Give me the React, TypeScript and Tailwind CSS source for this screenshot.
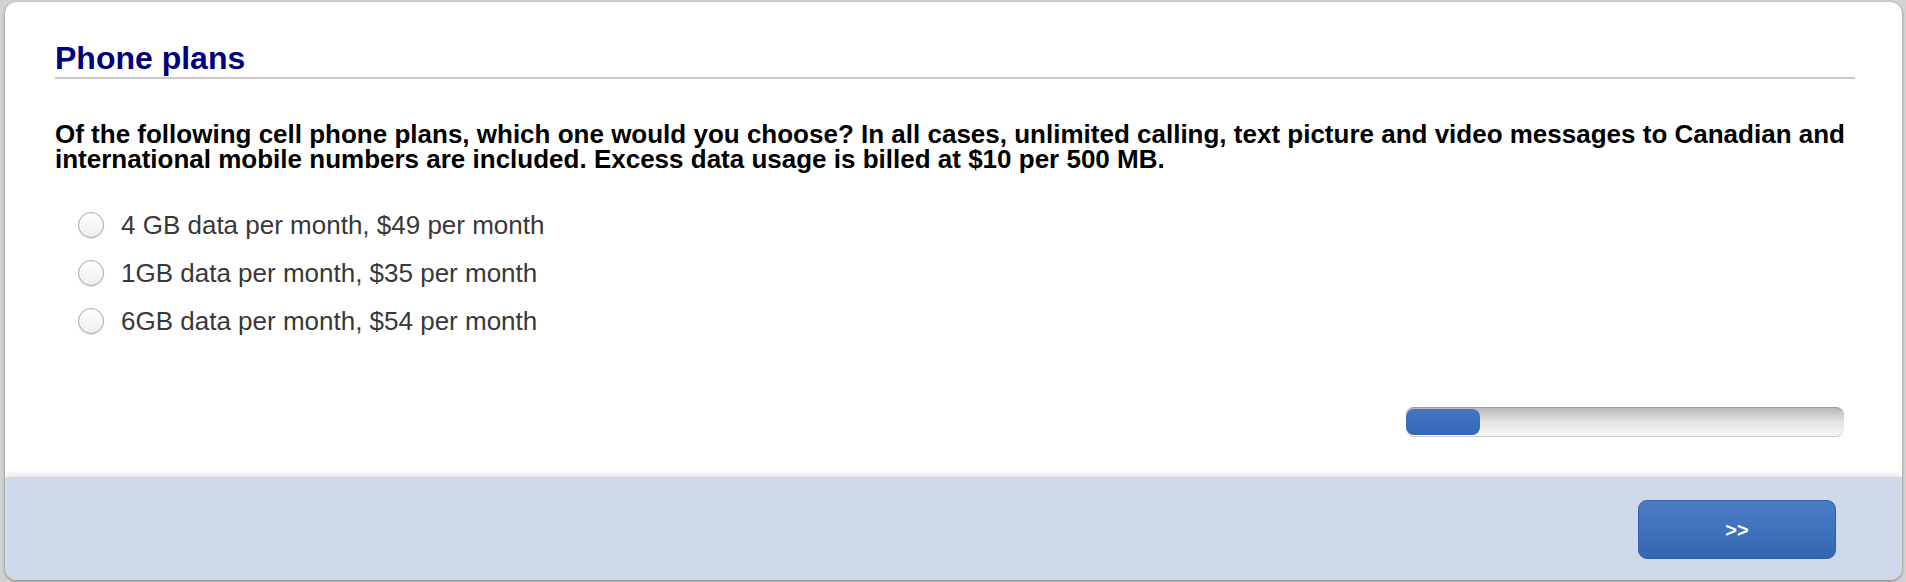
import { useState } from 'react';

const OPTIONS = [
  '4 GB data per month, $49 per month',
  '1GB data per month, $35 per month',
  '6GB data per month, $54 per month',
];

export default function App() {
  const [choice, setChoice] = useState<number | null>(null);
  const progress = 17;

  return (
    <div
      className="h-[582px] w-full bg-[#d2d2d2] pl-[5px] pr-[4px] pt-[2px] pb-[2px]"
      style={{ fontFamily: '"Liberation Sans", Arial, Helvetica, sans-serif' }}
    >
      <div className="flex h-[578px] flex-col overflow-hidden rounded-[12px] bg-white shadow-[0_1px_3px_rgba(0,0,0,0.45)]">
        <div className="flex h-[475px] flex-col px-[50px] pr-[47px] pt-[37px]">
          <h1 className="border-b-2 border-[#c9c9c9] pb-0 text-[32px] font-bold leading-[38px] text-[#000080]">
            Phone plans
          </h1>

          <p className="mt-[43px] text-[26px] font-bold leading-[25px] text-black">
            Of the following cell phone plans, which one would you choose? In all cases, unlimited calling, text picture and video messages to Canadian and international mobile numbers are included. Excess data usage is billed at $10 per 500 MB.
          </p>

          <div className="mt-[29px] flex flex-col">
            {OPTIONS.map((label, i) => (
              <label key={i} className="flex h-[48px] cursor-pointer items-center pl-[23px]" onClick={() => setChoice(i)}>
                <span className="flex h-[26px] w-[26px] items-center justify-center rounded-full border border-[#a8a8a8] bg-gradient-to-b from-white to-[#eeeeee] shadow-[0_1px_1px_rgba(0,0,0,0.12)]">
                  {choice === i && <span className="h-[10px] w-[10px] rounded-full bg-[#3566b1]" />}
                </span>
                <span className="ml-[17px] text-[26px] leading-[30px] text-[#383838]">{label}</span>
              </label>
            ))}
          </div>

          <div className="mt-auto mb-[40px] flex justify-end pr-[11px]">
            <div className="h-[30px] w-[438px] rounded-[8px] border-t border-[#9a9a9a] border-b border-b-[#cccccc] bg-gradient-to-b from-[#b9b9b9] via-[#e4e4e4] to-[#f6f6f6] py-[1px]">
              <div
                className="h-full rounded-[8px] bg-gradient-to-b from-[#4275c4] to-[#3466b4]"
                style={{ width: `${progress}%` }}
              />
            </div>
          </div>
        </div>

        <div className="relative flex flex-1 items-start justify-end bg-[#cfd9ea] pr-[66px] pt-[23px] shadow-[0_-2px_6px_rgba(0,0,0,0.12)]">
          <button className="flex h-[59px] w-[198px] items-center justify-center rounded-[9px] border border-[#2f60a8] bg-gradient-to-b from-[#4a7dc6] to-[#3466b2] text-[20px] font-bold text-white">
            &gt;&gt;
          </button>
        </div>
      </div>
    </div>
  );
}
